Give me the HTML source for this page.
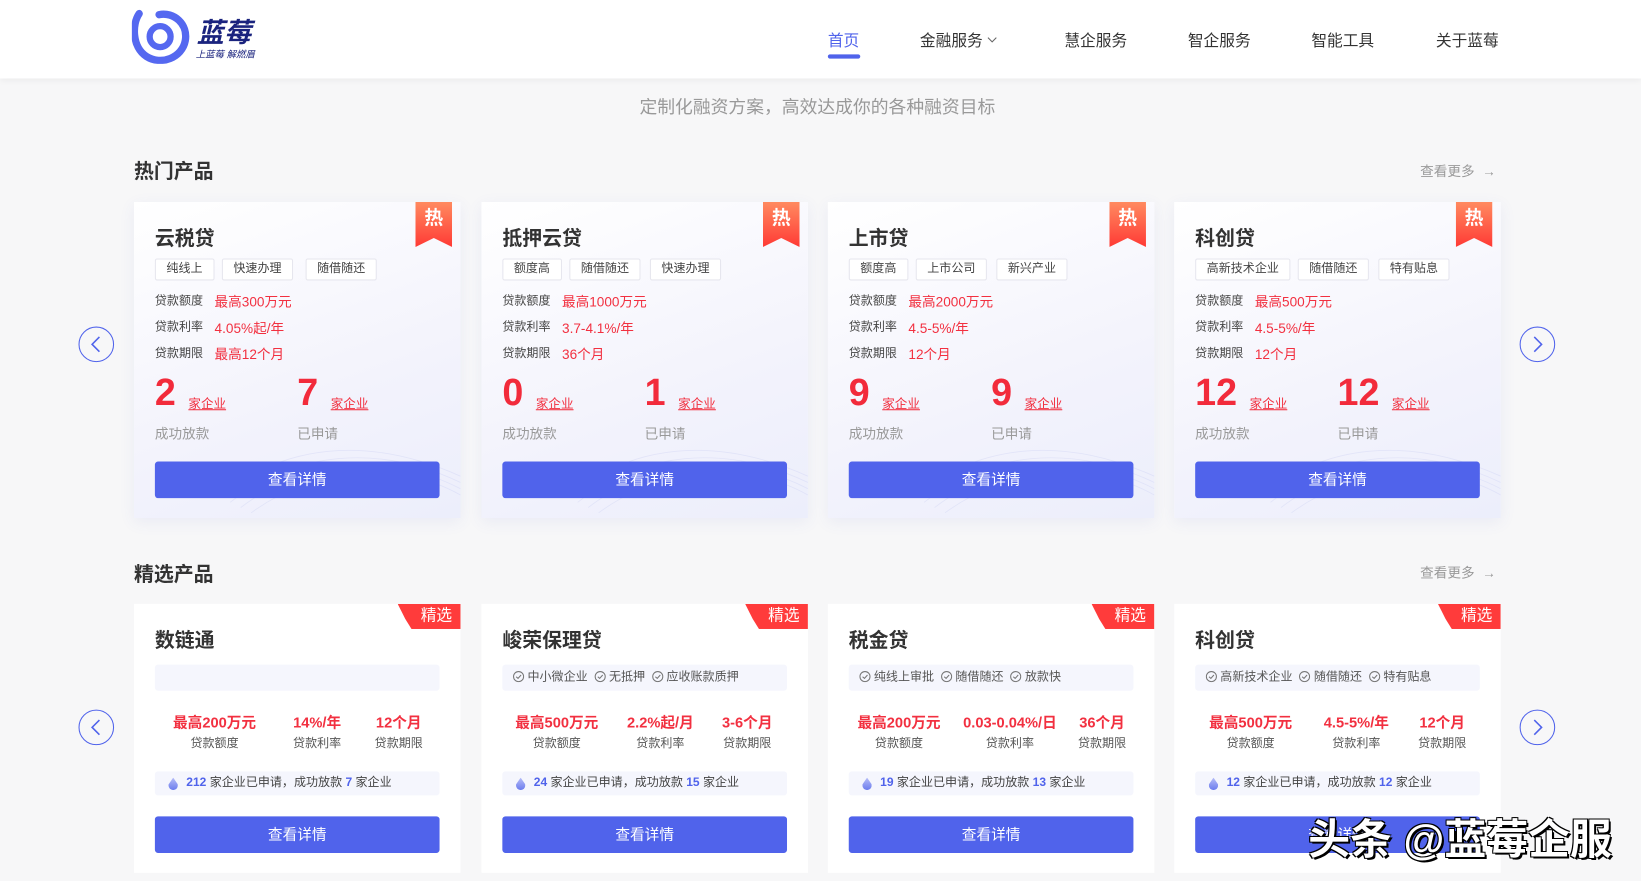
<!DOCTYPE html>
<html><head><meta charset="utf-8">
<style>
*{margin:0;padding:0;box-sizing:border-box}
html,body{width:1641px;height:881px;overflow:hidden;background:#f7f7f8}
body{font-family:"Liberation Sans","Noto Sans CJK SC",sans-serif;color:#333}
#w{position:absolute;left:0;top:0;width:1568px;height:842px;transform:scale(1.04656);transform-origin:0 0}
.a{position:absolute;white-space:nowrap}
.hdr{position:absolute;left:0;top:0;width:1568px;height:75px;background:#fff;box-shadow:0 2px 6px rgba(0,0,0,.05)}
.nav{font-size:15px;color:#333;top:28px}
.sec{font-size:19px;font-weight:bold;color:#333}
.more{font-size:13px;color:#999}
.card{position:absolute;width:312px;background:linear-gradient(160deg,#fff 0%,#f3f3fc 60%,#eceefb 100%);box-shadow:0 4px 14px rgba(80,90,200,.08)}
.card2{position:absolute;width:312px;height:257px;background:#fff}
.t{font-size:19px;font-weight:bold;color:#333;left:20px}
.tag{position:absolute;top:54px;height:21px;border:1px solid #e6e6ee;border-radius:2px;font-size:11.5px;color:#444;line-height:19px;padding:0 10px;background:#fff}
.lb{font-size:11.5px;color:#444;left:20px}
.rv{font-size:13px;color:#f23040;left:77px}
.num{font-size:36px;font-weight:bold;color:#f22b3b;top:161px}
.unit{font-size:12px;color:#f23040;top:184px;text-decoration:underline}
.sl{font-size:13px;color:#999;top:211px}
.btn{position:absolute;left:20px;width:272px;height:35px;background:#5063eb;border-radius:3px;color:#fff;font-size:14px;text-align:center;line-height:35px}
.hot{position:absolute;right:8px;top:0;width:35px;height:43px;background:linear-gradient(#ff8a60,#ff3a35);clip-path:polygon(0 0,100% 0,100% 100%,50% 80%,0 100%);color:#fff;font-size:18px;font-weight:bold;text-align:center;line-height:30px}
.sel{position:absolute;right:0;top:0;width:60px;height:24px;background:#ff3b3b;clip-path:polygon(0 0,100% 0,100% 100%,22% 100%,12% 60%);color:#fff;font-size:15px;line-height:23px;text-align:right;padding-right:8px}
.gb{position:absolute;left:20px;width:272px;background:#f5f6fd;border-radius:3px}
.v{position:absolute;font-size:14px;font-weight:bold;color:#f23040;top:103px;transform:translateX(-50%);white-space:nowrap}
.vl{position:absolute;font-size:11.5px;color:#555;top:125px;transform:translateX(-50%);white-space:nowrap}
.chk{font-size:11.5px;color:#555;line-height:25px;padding-left:10px}
.chk svg{vertical-align:-2px;margin-right:3px}
.info{font-size:11.5px;color:#444;line-height:23px;padding-left:30px}
.info b{color:#5063eb}
.drop{position:absolute;left:13px;top:6px;width:9px;height:12px;background:linear-gradient(#b6bdf7,#6b7cee);border-radius:50% 50% 50% 50%/60% 60% 40% 40%;clip-path:polygon(50% 0,100% 55%,100% 100%,0 100%,0 55%)}
.arr{position:absolute;width:34px;height:34px;border:1px solid #5063eb;border-radius:50%}
.wave{position:absolute;right:0;bottom:0;width:230px;height:90px;opacity:.35}
</style></head><body><div id="w">
<div class="hdr"></div>
<svg class="a" style="left:126px;top:9px" width="56" height="52" viewBox="0 0 56 52"><path d="M7 4 C0 14 0 36 14 45 C28 54 48 46 51 30 C54 14 40 2 26 5" fill="none" stroke="#5568f0" stroke-width="7" stroke-linecap="round"/><circle cx="27" cy="26" r="10" fill="none" stroke="#5568f0" stroke-width="6"/></svg>
<div class="a" style="left:188px;top:11px;font-size:26px;font-weight:bold;color:#1a237e;font-style:italic">蓝莓</div>
<div class="a" style="left:187px;top:45px;font-size:9px;color:#1a237e;font-style:italic">上蓝莓 解燃眉</div>
<div class="a nav" style="left:791px;color:#5063eb">首页</div>
<div class="a" style="left:791px;top:52px;width:31px;height:4px;border-radius:2px;background:#5063eb"></div>
<div class="a nav" style="left:879px">金融服务 <svg width="10" height="8" style="vertical-align:2px"><path d="M1 2 L5 6 L9 2" fill="none" stroke="#666" stroke-width="1"/></svg></div>
<div class="a nav" style="left:1017px">慧企服务</div>
<div class="a nav" style="left:1135px">智企服务</div>
<div class="a nav" style="left:1253px">智能工具</div>
<div class="a nav" style="left:1372px">关于蓝莓</div>
<div class="a" style="left:0;width:1568px;text-align:center;top:88px;font-size:17px;color:#999;transform:translateX(-3px)">定制化融资方案，高效达成你的各种融资目标</div>

<div class="a sec" style="left:128px;top:149px">热门产品</div>
<div class="a more" style="left:1357px;top:153px">查看更多 &nbsp;→</div>
<div class="a sec" style="left:128px;top:534px">精选产品</div>
<div class="a more" style="left:1357px;top:537px">查看更多 &nbsp;→</div>

<div class="arr" style="left:75px;top:312px"><svg width="32" height="32"><path d="M19 9 L12 16 L19 23" fill="none" stroke="#5063eb" stroke-width="1.5"/></svg></div>
<div class="arr" style="left:1452px;top:312px"><svg width="32" height="32"><path d="M13 9 L20 16 L13 23" fill="none" stroke="#5063eb" stroke-width="1.5"/></svg></div>
<div class="arr" style="left:75px;top:678px"><svg width="32" height="32"><path d="M19 9 L12 16 L19 23" fill="none" stroke="#5063eb" stroke-width="1.5"/></svg></div>
<div class="arr" style="left:1452px;top:678px"><svg width="32" height="32"><path d="M13 9 L20 16 L13 23" fill="none" stroke="#5063eb" stroke-width="1.5"/></svg></div>

<div class="card" style="left:128px;top:193px;height:302px">
<svg class="wave" viewBox="0 0 230 90"><g fill="none" stroke="#c9cdf3" stroke-width=".8"><path d="M0 70 C60 20 140 10 230 50"/><path d="M10 75 C70 27 150 18 230 56"/><path d="M20 80 C80 34 160 26 230 62"/><path d="M30 85 C90 41 170 34 230 68"/></g></svg>
<div class="hot">热</div><div class="a t" style="top:20px">云税贷</div>
<div class="tag" style="left:20px">纯线上</div><div class="tag" style="left:84px">快速办理</div><div class="tag" style="left:164px">随借随还</div>
<div class="a lb" style="top:86px">贷款额度</div><div class="a rv" style="top:85px">最高300万元</div>
<div class="a lb" style="top:111px">贷款利率</div><div class="a rv" style="top:110px">4.05%起/年</div>
<div class="a lb" style="top:136px">贷款期限</div><div class="a rv" style="top:135px">最高12个月</div>
<div class="a num" style="left:20px">2</div><div class="a unit" style="left:52px">家企业</div>
<div class="a num" style="left:156px">7</div><div class="a unit" style="left:188px">家企业</div>
<div class="a sl" style="left:20px">成功放款</div><div class="a sl" style="left:156px">已申请</div>
<div class="btn" style="top:248px">查看详情</div></div>

<div class="card" style="left:460px;top:193px;height:302px">
<svg class="wave" viewBox="0 0 230 90"><g fill="none" stroke="#c9cdf3" stroke-width=".8"><path d="M0 70 C60 20 140 10 230 50"/><path d="M10 75 C70 27 150 18 230 56"/><path d="M20 80 C80 34 160 26 230 62"/><path d="M30 85 C90 41 170 34 230 68"/></g></svg>
<div class="hot">热</div><div class="a t" style="top:20px">抵押云贷</div>
<div class="tag" style="left:20px">额度高</div><div class="tag" style="left:84px">随借随还</div><div class="tag" style="left:161px">快速办理</div>
<div class="a lb" style="top:86px">贷款额度</div><div class="a rv" style="top:85px">最高1000万元</div>
<div class="a lb" style="top:111px">贷款利率</div><div class="a rv" style="top:110px">3.7-4.1%/年</div>
<div class="a lb" style="top:136px">贷款期限</div><div class="a rv" style="top:135px">36个月</div>
<div class="a num" style="left:20px">0</div><div class="a unit" style="left:52px">家企业</div>
<div class="a num" style="left:156px">1</div><div class="a unit" style="left:188px">家企业</div>
<div class="a sl" style="left:20px">成功放款</div><div class="a sl" style="left:156px">已申请</div>
<div class="btn" style="top:248px">查看详情</div></div>

<div class="card" style="left:791px;top:193px;height:302px">
<svg class="wave" viewBox="0 0 230 90"><g fill="none" stroke="#c9cdf3" stroke-width=".8"><path d="M0 70 C60 20 140 10 230 50"/><path d="M10 75 C70 27 150 18 230 56"/><path d="M20 80 C80 34 160 26 230 62"/><path d="M30 85 C90 41 170 34 230 68"/></g></svg>
<div class="hot">热</div><div class="a t" style="top:20px">上市贷</div>
<div class="tag" style="left:20px">额度高</div><div class="tag" style="left:84px">上市公司</div><div class="tag" style="left:161px">新兴产业</div>
<div class="a lb" style="top:86px">贷款额度</div><div class="a rv" style="top:85px">最高2000万元</div>
<div class="a lb" style="top:111px">贷款利率</div><div class="a rv" style="top:110px">4.5-5%/年</div>
<div class="a lb" style="top:136px">贷款期限</div><div class="a rv" style="top:135px">12个月</div>
<div class="a num" style="left:20px">9</div><div class="a unit" style="left:52px">家企业</div>
<div class="a num" style="left:156px">9</div><div class="a unit" style="left:188px">家企业</div>
<div class="a sl" style="left:20px">成功放款</div><div class="a sl" style="left:156px">已申请</div>
<div class="btn" style="top:248px">查看详情</div></div>

<div class="card" style="left:1122px;top:193px;height:302px">
<svg class="wave" viewBox="0 0 230 90"><g fill="none" stroke="#c9cdf3" stroke-width=".8"><path d="M0 70 C60 20 140 10 230 50"/><path d="M10 75 C70 27 150 18 230 56"/><path d="M20 80 C80 34 160 26 230 62"/><path d="M30 85 C90 41 170 34 230 68"/></g></svg>
<div class="hot">热</div><div class="a t" style="top:20px">科创贷</div>
<div class="tag" style="left:20px">高新技术企业</div><div class="tag" style="left:118px">随借随还</div><div class="tag" style="left:195px">特有贴息</div>
<div class="a lb" style="top:86px">贷款额度</div><div class="a rv" style="top:85px">最高500万元</div>
<div class="a lb" style="top:111px">贷款利率</div><div class="a rv" style="top:110px">4.5-5%/年</div>
<div class="a lb" style="top:136px">贷款期限</div><div class="a rv" style="top:135px">12个月</div>
<div class="a num" style="left:20px">12</div><div class="a unit" style="left:72px">家企业</div>
<div class="a num" style="left:156px">12</div><div class="a unit" style="left:208px">家企业</div>
<div class="a sl" style="left:20px">成功放款</div><div class="a sl" style="left:156px">已申请</div>
<div class="btn" style="top:248px">查看详情</div></div>

<div class="card2" style="left:128px;top:577px">
<div class="sel">精选</div><div class="a t" style="top:20px">数链通</div>
<div class="gb" style="top:58px;height:25px"></div>
<div class="v" style="left:77px">最高200万元</div><div class="vl" style="left:77px">贷款额度</div>
<div class="v" style="left:175px">14%/年</div><div class="vl" style="left:175px">贷款利率</div>
<div class="v" style="left:253px">12个月</div><div class="vl" style="left:253px">贷款期限</div>
<div class="gb info" style="top:160px;height:23px"><span class="drop"></span><b>212</b> 家企业已申请，成功放款 <b>7</b> 家企业</div>
<div class="btn" style="top:203px">查看详情</div></div>

<div class="card2" style="left:460px;top:577px">
<div class="sel">精选</div><div class="a t" style="top:20px">峻荣保理贷</div>
<div class="gb chk" style="top:58px;height:25px"><svg width="11" height="11"><circle cx="5.5" cy="5.5" r="4.8" fill="none" stroke="#777"/><path d="M3.2 5.6 L5 7.2 L7.9 4" fill="none" stroke="#777"/></svg>中小微企业 &nbsp;<svg width="11" height="11"><circle cx="5.5" cy="5.5" r="4.8" fill="none" stroke="#777"/><path d="M3.2 5.6 L5 7.2 L7.9 4" fill="none" stroke="#777"/></svg>无抵押 &nbsp;<svg width="11" height="11"><circle cx="5.5" cy="5.5" r="4.8" fill="none" stroke="#777"/><path d="M3.2 5.6 L5 7.2 L7.9 4" fill="none" stroke="#777"/></svg>应收账款质押</div>
<div class="v" style="left:72px">最高500万元</div><div class="vl" style="left:72px">贷款额度</div>
<div class="v" style="left:171px">2.2%起/月</div><div class="vl" style="left:171px">贷款利率</div>
<div class="v" style="left:254px">3-6个月</div><div class="vl" style="left:254px">贷款期限</div>
<div class="gb info" style="top:160px;height:23px"><span class="drop"></span><b>24</b> 家企业已申请，成功放款 <b>15</b> 家企业</div>
<div class="btn" style="top:203px">查看详情</div></div>

<div class="card2" style="left:791px;top:577px">
<div class="sel">精选</div><div class="a t" style="top:20px">税金贷</div>
<div class="gb chk" style="top:58px;height:25px"><svg width="11" height="11"><circle cx="5.5" cy="5.5" r="4.8" fill="none" stroke="#777"/><path d="M3.2 5.6 L5 7.2 L7.9 4" fill="none" stroke="#777"/></svg>纯线上审批 &nbsp;<svg width="11" height="11"><circle cx="5.5" cy="5.5" r="4.8" fill="none" stroke="#777"/><path d="M3.2 5.6 L5 7.2 L7.9 4" fill="none" stroke="#777"/></svg>随借随还 &nbsp;<svg width="11" height="11"><circle cx="5.5" cy="5.5" r="4.8" fill="none" stroke="#777"/><path d="M3.2 5.6 L5 7.2 L7.9 4" fill="none" stroke="#777"/></svg>放款快</div>
<div class="v" style="left:68px">最高200万元</div><div class="vl" style="left:68px">贷款额度</div>
<div class="v" style="left:174px">0.03-0.04%/日</div><div class="vl" style="left:174px">贷款利率</div>
<div class="v" style="left:262px">36个月</div><div class="vl" style="left:262px">贷款期限</div>
<div class="gb info" style="top:160px;height:23px"><span class="drop"></span><b>19</b> 家企业已申请，成功放款 <b>13</b> 家企业</div>
<div class="btn" style="top:203px">查看详情</div></div>

<div class="card2" style="left:1122px;top:577px">
<div class="sel">精选</div><div class="a t" style="top:20px">科创贷</div>
<div class="gb chk" style="top:58px;height:25px"><svg width="11" height="11"><circle cx="5.5" cy="5.5" r="4.8" fill="none" stroke="#777"/><path d="M3.2 5.6 L5 7.2 L7.9 4" fill="none" stroke="#777"/></svg>高新技术企业 &nbsp;<svg width="11" height="11"><circle cx="5.5" cy="5.5" r="4.8" fill="none" stroke="#777"/><path d="M3.2 5.6 L5 7.2 L7.9 4" fill="none" stroke="#777"/></svg>随借随还 &nbsp;<svg width="11" height="11"><circle cx="5.5" cy="5.5" r="4.8" fill="none" stroke="#777"/><path d="M3.2 5.6 L5 7.2 L7.9 4" fill="none" stroke="#777"/></svg>特有贴息</div>
<div class="v" style="left:73px">最高500万元</div><div class="vl" style="left:73px">贷款额度</div>
<div class="v" style="left:174px">4.5-5%/年</div><div class="vl" style="left:174px">贷款利率</div>
<div class="v" style="left:256px">12个月</div><div class="vl" style="left:256px">贷款期限</div>
<div class="gb info" style="top:160px;height:23px"><span class="drop"></span><b>12</b> 家企业已申请，成功放款 <b>12</b> 家企业</div>
<div class="btn" style="top:203px">查看详情</div></div>

<div class="a" style="left:1250px;top:770px;font-size:40px;font-weight:bold;color:#fff;text-shadow:2px 2px 0 #000,-1px -1px 0 #000,1px -1px 0 #000,-1px 1px 0 #000">头条 @蓝莓企服</div>
</div></body></html>
